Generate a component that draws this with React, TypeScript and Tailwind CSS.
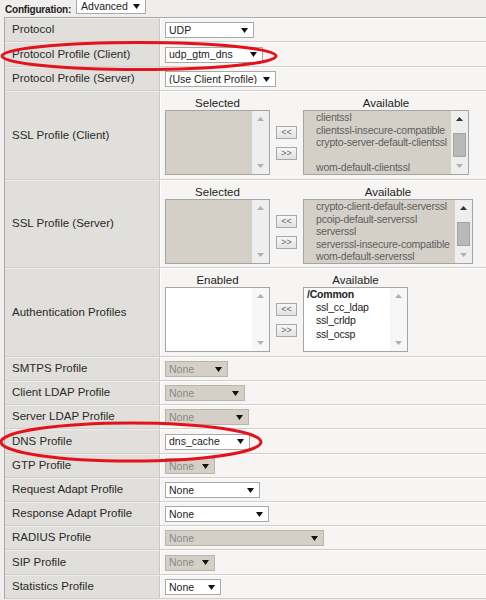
// Virtual server "Configuration: Advanced" profile table, with two red marker ellipses on top.
import clsx from "clsx";

const Arrow = () => (
  <svg width="7" height="5" viewBox="0 0 7 5" className="shrink-0" aria-hidden>
    <path d="M0 0h7L3.5 5z" fill="#111" />
  </svg>
);

function Select({ value, w, disabled }: { value: string; w: string; disabled?: boolean }) {
  return (
    <div
      className={clsx(
        "flex h-[16px] items-center justify-between gap-[2px] border pl-[3px] pr-[5px] text-[10.5px] leading-none",
        w,
        disabled ? "border-[#b9b6af] bg-[#d4d0c8] text-[#8a8a8a]" : "border-[#a9a9a9] bg-white text-[#222]"
      )}
    >
      <span className="overflow-hidden whitespace-nowrap">{value}</span>
      <Arrow />
    </div>
  );
}

function Scrollbar({ active, light }: { active?: boolean; light?: boolean }) {
  return (
    <div className={clsx("flex w-[17px] shrink-0 flex-col items-center justify-between py-[6px]", light ? "bg-[#f7f7f7]" : "bg-[#eeeeee]")}>
      <svg width="7" height="4" viewBox="0 0 7 4"><path d="M0 4h7L3.5 0z" fill={active ? "#333" : "#b0b0b0"} /></svg>
      {active && <div className="mt-[4px] h-[24px] w-[13px] border border-[#a4a4a4] bg-[#b9b9b9]" />}
      <svg width="7" height="4" viewBox="0 0 7 4"><path d="M0 0h7L3.5 4z" fill="#b0b0b0" /></svg>
    </div>
  );
}

function ListBox({ items, w, disabled, active, lead = "leading-[12.6px]" }: { items: { t: string; b?: boolean }[]; w: string; disabled?: boolean; active?: boolean; lead?: string }) {
  return (
    <div className={clsx("flex h-[65px] border border-[#a5a5a5]", w, disabled ? "bg-[#d4d0c8]" : "bg-white")}>
      <div className={clsx("min-w-0 flex-1 overflow-hidden text-[10.5px] tracking-[-0.2px]", lead, disabled ? "text-[#5e5e5e]" : "text-[#222]")}>
        {items.map((it, i) => (
          <div key={i} className={clsx("whitespace-nowrap", it.b ? "pl-[3px] font-bold" : "pl-[12px]")}>
            {it.t || "\u00a0"}
          </div>
        ))}
      </div>
      <Scrollbar active={active} light={!disabled} />
    </div>
  );
}

const Btn = ({ t }: { t: string }) => (
  <div className="flex h-[13px] w-[21px] items-center justify-center border border-[#a8a8a8] bg-gradient-to-b from-[#f7f7f7] to-[#e2e2e2] text-[9px] leading-none text-[#666]">
    {t}
  </div>
);

function Picker({ left, leftDisabled, right, rightW, rightDisabled, lead }: { left: string; leftDisabled?: boolean; right: { t: string; b?: boolean }[]; rightW: string; rightDisabled?: boolean; lead?: string }) {
  return (
    <div className="flex self-start pt-[4px]">
      <div className="flex flex-col">
        <div className="text-center text-[11.5px] leading-[14px] text-[#222]">{left}</div>
        <ListBox items={[]} w="w-[105px]" disabled={leftDisabled} />
      </div>
      <div className="ml-[6px] mt-[14px] flex h-[65px] flex-col justify-center gap-[8px]">
        <Btn t="<<" />
        <Btn t=">>" />
      </div>
      <div className="ml-[6px] flex flex-col">
        <div className="text-center text-[11.5px] leading-[14px] text-[#222]">Available</div>
        <ListBox items={right} w={rightW} disabled={rightDisabled} active={rightDisabled} lead={lead} />
      </div>
    </div>
  );
}

function Row({ label, h, children }: { label: string; h: string; children: React.ReactNode }) {
  return (
    <div className={clsx("flex border-b border-[#d0cfcc]", h)}>
      <div className="flex w-[155px] shrink-0 items-center border-r border-t border-r-[#c9c8c5] border-t-[#eeedea] bg-[#e0dfdb] pl-[7px] text-[11.5px] text-[#2a2a2a]">
        {label}
      </div>
      <div className="flex flex-1 items-center border-l border-t border-white bg-[#f6f5f3] pl-[4px]">{children}</div>
    </div>
  );
}

export default function App() {
  return (
    <div className="relative h-[600px] w-[486px] overflow-hidden bg-[#efeeec] font-['Liberation_Sans',Arial,sans-serif]">
      {/* header */}
      <div className="flex h-[17px] items-start">
        <span className="ml-[5px] mt-[4px] text-[10px] font-bold leading-[11px] tracking-[-0.2px] text-[#222]">Configuration:</span>
        <div className="-mt-[1px] ml-[5px] flex h-[15px] w-[70px] items-center justify-between border border-[#a9a9a9] bg-white pl-[4px] pr-[5px] text-[10.5px] leading-none text-[#222]">
          <span>Advanced</span>
          <Arrow />
        </div>
      </div>

      {/* table */}
      <div className="ml-[4px] border-l border-t border-[#a9a9a9]">
        <Row label="Protocol" h="h-[24px]"><Select value="UDP" w="w-[89px]" /></Row>
        <Row label="Protocol Profile (Client)" h="h-[25px]"><Select value="udp_gtm_dns" w="w-[98px]" /></Row>
        <Row label="Protocol Profile (Server)" h="h-[24px]"><Select value="(Use Client Profile)" w="w-[111px]" /></Row>
        <Row label="SSL Profile (Client)" h="h-[89px]">
          <Picker
            left="Selected"
            leftDisabled
            rightW="w-[166px]"
            rightDisabled
            right={[{ t: "clientssl" }, { t: "clientssl-insecure-compatible" }, { t: "crypto-server-default-clientssl" }, { t: "" }, { t: "wom-default-clientssl" }]}
          />
        </Row>
        <Row label="SSL Profile (Server)" h="h-[88px]">
          <Picker
            left="Selected"
            leftDisabled
            rightW="w-[170px]"
            rightDisabled
            right={[{ t: "crypto-client-default-serverssl" }, { t: "pcoip-default-serverssl" }, { t: "serverssl" }, { t: "serverssl-insecure-compatible" }, { t: "wom-default-serverssl" }]}
          />
        </Row>
        <Row label="Authentication Profiles" h="h-[89px]">
          <Picker
            left="Enabled"
            rightW="w-[105px]"
            lead="leading-[13.2px]"
            right={[{ t: "/Common", b: true }, { t: "ssl_cc_ldap" }, { t: "ssl_crldp" }, { t: "ssl_ocsp" }]}
          />
        </Row>
        <Row label="SMTPS Profile" h="h-[24px]"><Select value="None" w="w-[63px]" disabled /></Row>
        <Row label="Client LDAP Profile" h="h-[24px]"><Select value="None" w="w-[80px]" disabled /></Row>
        <Row label="Server LDAP Profile" h="h-[24px]"><Select value="None" w="w-[84px]" disabled /></Row>
        <Row label="DNS Profile" h="h-[25px]"><Select value="dns_cache" w="w-[85px]" /></Row>
        <Row label="GTP Profile" h="h-[24px]"><Select value="None" w="w-[50px]" disabled /></Row>
        <Row label="Request Adapt Profile" h="h-[24px]"><Select value="None" w="w-[95px]" /></Row>
        <Row label="Response Adapt Profile" h="h-[24px]"><Select value="None" w="w-[104px]" /></Row>
        <Row label="RADIUS Profile" h="h-[24px]"><Select value="None" w="w-[159px]" disabled /></Row>
        <Row label="SIP Profile" h="h-[25px]"><Select value="None" w="w-[50px]" disabled /></Row>
        <Row label="Statistics Profile" h="h-[24px]"><Select value="None" w="w-[56px]" /></Row>
      </div>

      {/* hand-drawn highlight rings */}
      <svg className="pointer-events-none absolute inset-0" width="486" height="600" viewBox="0 0 486 600" aria-hidden>
        <ellipse cx="139" cy="56" rx="137" ry="13.5" fill="none" stroke="#e3121b" strokeWidth="3" />
        <ellipse cx="131" cy="442" rx="130" ry="19" fill="none" stroke="#e3121b" strokeWidth="3" />
      </svg>
    </div>
  );
}
